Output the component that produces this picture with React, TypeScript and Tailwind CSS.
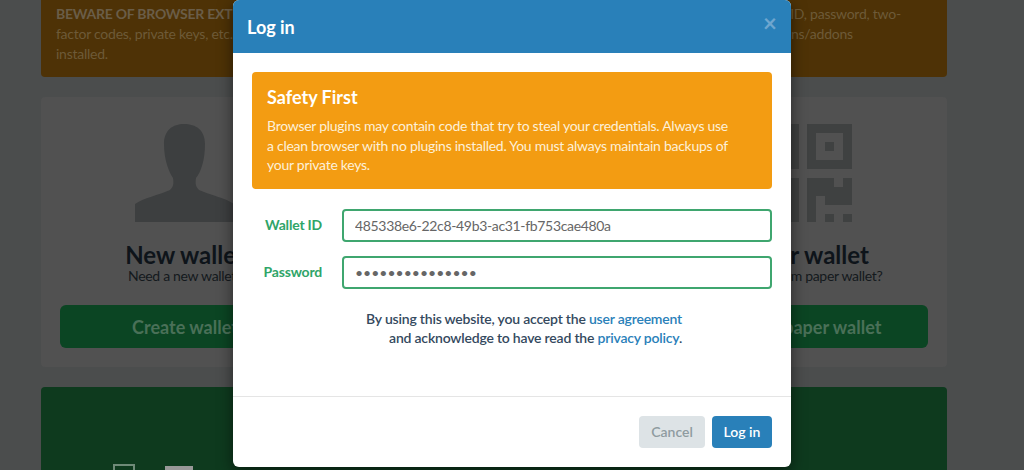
import React from "react";

const lato = "font-['Lato','Open_Sans',sans-serif]";

const UserIcon = () => (
  <svg width="100" height="98" viewBox="0 0 100 98" className="block">
    <path
      fill="#3d3f40"
      d="M0 98V80C8 74 24 71 35 66C38 63 39 60 38 54C34 48 29 36 29 20C29 6 38 0 49 0C61 0 70 6 70 20C70 36 66 48 61 54C60 60 61 63 64 66C75 71 91 74 99 80V98Z"
    />
  </svg>
);

const finder = (x: number, y: number) => (
  <path
    fillRule="evenodd"
    d={`M${x} ${y}h45v45h-45zM${x + 9} ${y + 9}v27h27v-27zM${x + 18} ${y + 18}h9v9h-9z`}
  />
);

const QrIcon = () => (
  <svg width="98" height="98" viewBox="0 0 98 98" fill="#3f4141" className="block">
    {finder(0, 0)}
    {finder(53, 0)}
    {finder(0, 54)}
    <rect x="53" y="54" width="27" height="9" />
    <rect x="89" y="54" width="9" height="9" />
    <rect x="53" y="63" width="45" height="9" />
    <rect x="53" y="72" width="9" height="27" />
    <rect x="71" y="72" width="27" height="9" />
    <rect x="71" y="90" width="9" height="8" />
    <rect x="89" y="90" width="9" height="8" />
  </svg>
);

const WalletCol = ({
  icon,
  title,
  sub,
  action,
}: {
  icon: React.ReactNode;
  title: string;
  sub: string;
  action: string;
}) => (
  <div className="w-[250px] flex flex-col items-center">
    <div className="h-[98px] flex justify-center">{icon}</div>
    <h2 className="mt-5 text-2xl leading-[26px] font-bold text-[#0e141a] whitespace-nowrap">{title}</h2>
    <p className="text-sm leading-4 tracking-[-0.3px] text-[#14191d] whitespace-nowrap">{sub}</p>
    <div className="mt-[21px] w-full h-[43px] rounded-md bg-[#0b4523] text-[#4a7058] text-lg font-bold flex items-center justify-center">
      {action}
    </div>
  </div>
);

const Field = ({ label, type, value }: { label: string; type: string; value: string }) => (
  <div className="flex items-center gap-5">
    <label className="w-[70px] pb-[2px] text-right text-sm font-bold tracking-[-0.2px] text-[#2fa568] whitespace-nowrap">
      {label}
    </label>
    <input
      readOnly
      type={type}
      value={value}
      className={
        type === "password"
          ? "flex-1 h-[33px] rounded border-2 border-[#3fa66f] bg-white px-[11px] text-sm text-[#666666] outline-none"
          : "flex-1 h-[33px] rounded border-2 border-[#3fa66f] bg-white px-[11px] text-sm tracking-[-0.33px] text-[#666666] outline-none"
      }
    />
  </div>
);

export default function App() {
  return (
    <div className={`relative h-[470px] w-full overflow-hidden bg-[#4b4d4d] ${lato}`}>
      {/* page behind the dialog */}
      <div className="mx-[41px] w-[906px] flex flex-col gap-5">
        <div className="h-[77px] rounded-b bg-[#4e3206] px-[15px] pt-1 text-sm leading-5 tracking-[-0.25px] text-[#6d5a38] whitespace-nowrap">
          <b className="font-bold text-[#6a5d48]">BEWARE OF BROWSER EXTENSIONS:</b> Browser extensions are able to read everything on your pages, including your wallet ID, password, two-
          <br />
          factor codes, private keys, etc. We very strongly recommend that you always use a clean browser profile without any extensions/addons
          <br />
          installed.
        </div>
        <div className="h-[270px] rounded bg-[#515151] pt-[27px] px-[19px] flex justify-between">
          <WalletCol icon={<UserIcon />} title="New wallet" sub="Need a new wallet?" action="Create wallet" />
          <WalletCol icon={<QrIcon />} title="Paper wallet" sub="Recover from paper wallet?" action="Import paper wallet" />
        </div>
        <div className="h-[100px] rounded bg-[#0e3a1e] pt-[77px] pl-[72px]">
          <svg width="80" height="6" viewBox="0 0 80 6" className="block">
            <rect x="1" y="1" width="20" height="8" fill="none" stroke="#6f8a78" strokeWidth="2" />
            <rect x="52" y="2" width="28" height="6" fill="#989898" />
          </svg>
        </div>
      </div>

      {/* dialog */}
      <div className="absolute inset-0 flex justify-center">
        <div className="w-[558px] h-[467px] rounded-md bg-white shadow-[0_5px_15px_rgba(0,0,0,0.5)] flex flex-col overflow-hidden">
          <div className="h-[53px] bg-[#2980b9] px-[14px] flex items-center justify-between">
            <h1 className="text-lg font-bold text-white">Log in</h1>
            <span className="text-2xl leading-none font-bold text-[#6ea6cf] -mt-[8px]">×</span>
          </div>
          <div className="flex-1 px-[19px] pt-[19px]">
            <div className="h-[117px] rounded bg-[#f39c12] pl-[15px] pr-[36px] pt-[15px] text-white">
              <h2 className="text-lg leading-5 font-bold">Safety First</h2>
              <p className="mt-[9px] text-sm leading-[19.6px] tracking-[-0.27px] text-[#fdf0d8]">
                Browser plugins may contain code that try to steal your credentials. Always use a clean browser with no
                plugins installed. You must always maintain backups of your private keys.
              </p>
            </div>
            <div className="mt-5 flex flex-col gap-[14px]">
              <Field label="Wallet ID" type="text" value="485338e6-22c8-49b3-ac31-fb753cae480a" />
              <Field label="Password" type="password" value="passwordpasswor" />
            </div>
            <p className="mt-5 pr-[90px] text-right text-sm leading-[19px] font-semibold tracking-[-0.2px] text-[#34495e]">
              By using this website, you accept the <a className="text-[#2980b9]">user agreement</a>
              <br />
              and acknowledge to have read the <a className="text-[#2980b9]">privacy policy</a>.
            </p>
          </div>
          <div className="h-[71px] border-t border-[#e5e5e5] px-[19px] pt-[19px] flex justify-end gap-[7px]">
            <button className="w-[66px] h-[32px] rounded bg-[#dde3e6] text-sm font-semibold text-[#8f9ba0]">Cancel</button>
            <button className="w-[60px] h-[32px] rounded bg-[#2980b9] text-sm font-semibold text-white">Log in</button>
          </div>
        </div>
      </div>
    </div>
  );
}
